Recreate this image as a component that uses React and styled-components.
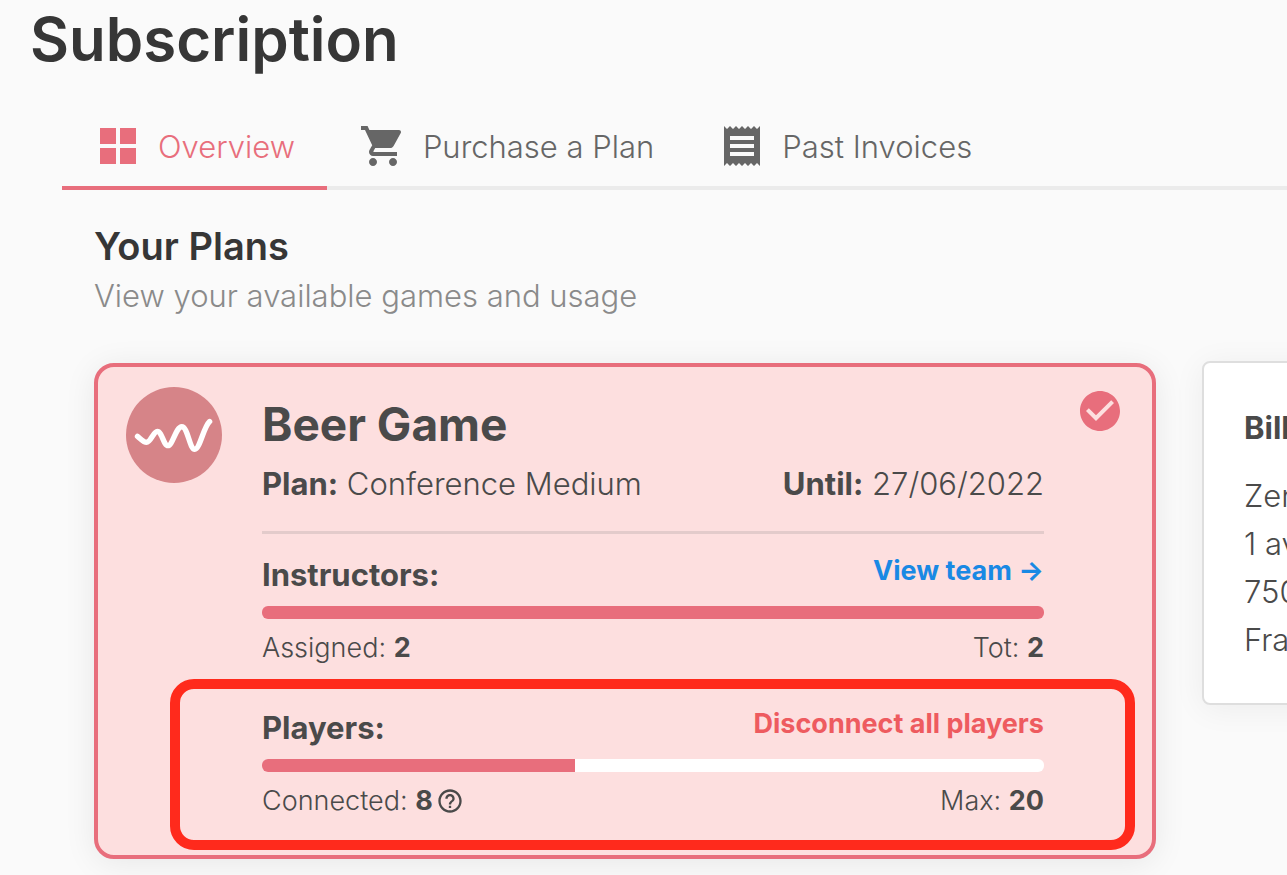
import React from 'react';
import styled, { createGlobalStyle } from 'styled-components'

const GlobalStyle = createGlobalStyle`
    * {
        box-sizing: border-box;
    }
    body {
        margin: 0;
        background: #fafafa;
        color: #4a4a4a;
        font-family: 'Inter', 'Liberation Sans', sans-serif;
        font-size: 31px;
        font-weight: 300;
        line-height: 48px;
        -webkit-font-smoothing: antialiased;
    }
    h1, h2, h3, h4, p {
        margin: 0;
    }
    button {
        padding: 0;
        border: 0;
        background: none;
        font-family: inherit;
        cursor: pointer;
    }
    svg {
        display: block;
        flex-shrink: 0;
    }
`

const Page = styled.main`
    padding-top: 7px;
    overflow: hidden;
`

const PageTitle = styled.h1`
    padding-left: 30px;
    color: #363636;
    font-size: 60px;
    font-weight: 600;
    line-height: 64px;
`

const Tabs = styled.nav`
    display: flex;
    margin: 35px 0 0 62px;
    box-shadow: inset 0 -4px 0 #ebebeb;
`

const Tab = styled.button`
    display: flex;
    align-items: center;
    gap: 16px;
    padding: 16px 32px;
    border-bottom: 4px solid ${ props => props.$active ? '#e86e7c' : 'transparent'};
    color: ${ props => props.$active ? '#e86e7c' : '#666666'};
    font-size: 31px;
    font-weight: 300;
    white-space: nowrap;
`

const TabLabel = styled.span`
    padding-top: 2px;
    line-height: 46px;
`

const Content = styled.section`
    padding: 32px 0 16px 94px;
`

const SectionTitle = styled.h2`
    color: #363636;
    font-size: 38px;
    font-weight: 600;
    line-height: 48px;
`

const Subtitle = styled.p`
    margin-top: 2px;
    color: #8a8a8a;
`

const Columns = styled.div`
    display: grid;
    grid-template-columns: calc(100% - 131px) 420px;
    gap: 46px;
    align-items: start;
    margin-top: 41px;
`

const PlanCard = styled.article`
    display: flex;
    align-items: flex-start;
    margin-top: 2px;
    padding: 20px 28px 34px;
    border: 4px solid #e86e7c;
    border-radius: 20px;
    background: #fddfdf;
    box-shadow: 0 4px 32px rgba(0, 0, 0, 0.08);
`

const PlanBody = styled.div`
    flex: 1;
    min-width: 0;
    margin: 5px 32px 0 40px;
`

const PlanName = styled.h3`
    font-size: 46px;
    font-weight: 700;
    line-height: 64px;
`

const PlanInfo = styled.div`
    display: flex;
    justify-content: space-between;
    margin-top: 4px;
    padding-bottom: 23px;
    border-bottom: 3px solid #e3cbcb;
`

const Usage = styled.section`
    position: relative;
    margin-top: ${ props => props.$highlighted ? '35px' : '16px'};
`

const Highlight = styled.div`
    position: absolute;
    inset: -24px -91px -29px -92px;
    border: 10px solid #ff2a1c;
    border-radius: 24px;
    pointer-events: none;
`

const UsageHeader = styled.div`
    display: flex;
    align-items: flex-start;
    justify-content: space-between;
    padding-top: 1px;
`

const UsageTitle = styled.h4`
    font-size: 31px;
    font-weight: 700;
`

const TeamLink = styled.a`
    color: #1989e4;
    font-size: 27px;
    font-weight: 700;
    line-height: 40px;
    text-decoration: none;
`

const DisconnectButton = styled.button`
    color: #ee5b5f;
    font-size: 27px;
    font-weight: 700;
    line-height: 40px;
`

const Bar = styled.div`
    height: 13px;
    margin: 7px 0 9px;
    border-radius: 6px;
    background: #ffffff;
    overflow: hidden;
`

const BarFill = styled.div`
    height: 100%;
    background: #e86e7c;
`

const UsageFooter = styled.div`
    display: flex;
    justify-content: space-between;
    font-size: 27px;
    line-height: 40px;
`

const Count = styled.span`
    display: flex;
    align-items: center;
    gap: 3px;
`

const BillingCard = styled.aside`
    padding: 41px 40px 39px;
    border: 2px solid #dedede;
    border-radius: 8px;
    background: #ffffff;
    box-shadow: 0 4px 32px rgba(0, 0, 0, 0.06);
    white-space: nowrap;
`

const BillingTitle = styled.h3`
    margin-bottom: 20px;
    font-size: 31px;
    font-weight: 700;
`

const Strong = styled.strong`
    font-weight: 700;
`

const Icon = ({ d, size = 48, color = 'currentColor' }) => (
    <svg width={size} height={size} viewBox="0 0 24 24" fill={color} aria-hidden="true">
        <path d={d} />
    </svg>
)

const icons = {
    grid: 'M3 3h8v8H3zM13 3h8v8h-8zM3 13h8v8H3zM13 13h8v8h-8z',
    cart: 'M7 18c-1.100 0-1.990.9-1.990 2S5.900 22 7 22s2-.9 2-2-.9-2-2-2zM1 2v2h2l3.600 7.590-1.350 2.450c-.16.280-.25.610-.25.960 0 1.100.9 2 2 2h12v-2H7.420c-.14 0-.25-.11-.25-.25l.03-.12.900-1.630h7.450c.75 0 1.410-.41 1.750-1.030l3.580-6.490c.08-.14.120-.31.120-.48 0-.55-.45-1-1-1H5.210l-.94-2H1zm16 16c-1.100 0-1.990.9-1.990 2s.89 2 1.990 2 2-.9 2-2-.9-2-2-2z',
    receipt: 'M18 17H6v-2h12v2zm0-4H6v-2h12v2zm0-4H6V7h12v2zM3 22l1.500-1.500L6 22l1.500-1.500L9 22l1.500-1.500L12 22l1.500-1.500L15 22l1.500-1.500L18 22l1.500-1.500L21 22V2l-1.500 1.500L18 2l-1.500 1.500L15 2l-1.500 1.500L12 2l-1.500 1.500L9 2 7.500 3.500 6 2 4.500 3.500 3 2v20z',
    check: 'M12 2C6.480 2 2 6.480 2 12s4.480 10 10 10 10-4.480 10-10S17.520 2 12 2zm-2 15l-5-5 1.410-1.410L10 14.170l7.590-7.590L19 8l-9 9z',
    help: 'M11 18h2v-2h-2v2zm1-16C6.480 2 2 6.480 2 12s4.480 10 10 10 10-4.480 10-10S17.520 2 12 2zm0 18c-4.410 0-8-3.590-8-8s3.590-8 8-8 8 3.590 8 8-3.590 8-8 8zm0-14c-2.210 0-4 1.790-4 4h2c0-1.100.9-2 2-2s2 .9 2 2c0 2-3 1.750-3 5h2c0-2.250 3-2.500 3-5 0-2.210-1.790-4-4-4z',
}

const GameLogo = () => (
    <svg width="96" height="96" viewBox="0 0 96 96" fill="none" aria-hidden="true">
        <circle cx="48" cy="48" r="48" fill="#d68488" />
        <path
            d="M11.500 49.300C14 51.200 17.500 55.300 20.500 55.300C25 55.300 27.200 44.500 31.300 44.500C36 44.500 37.500 58.600 42 58.600C46.500 58.600 50 39.700 55.800 39.700C61.800 39.700 63.500 62.300 68.800 62.300C73.800 62.300 77.500 40 83.600 34.500"
            stroke="#ffffff"
            strokeWidth="5.400"
            strokeLinecap="round"
            strokeLinejoin="round"
        />
    </svg>
)

const UsageBar = ({ value, max }) => (
    <Bar>
        <BarFill style={{ width: `${value / max * 100}%` }} />
    </Bar>
)

const App = () => (
    <>
        <GlobalStyle />
        <Page>
            <PageTitle>Subscription</PageTitle>
            <Tabs>
                <Tab $active><Icon d={icons.grid} /><TabLabel>Overview</TabLabel></Tab>
                <Tab><Icon d={icons.cart} /><TabLabel>Purchase a Plan</TabLabel></Tab>
                <Tab><Icon d={icons.receipt} /><TabLabel>Past Invoices</TabLabel></Tab>
            </Tabs>
            <Content>
                <SectionTitle>Your Plans</SectionTitle>
                <Subtitle>View your available games and usage</Subtitle>
                <Columns>
                    <PlanCard>
                        <GameLogo />
                        <PlanBody>
                            <PlanName>Beer Game</PlanName>
                            <PlanInfo>
                                <span><Strong>Plan:</Strong> Conference Medium</span>
                                <span><Strong>Until:</Strong> 27/06/2022</span>
                            </PlanInfo>
                            <Usage>
                                <UsageHeader>
                                    <UsageTitle>Instructors:</UsageTitle>
                                    <TeamLink href="#team">View team →</TeamLink>
                                </UsageHeader>
                                <UsageBar value={2} max={2} />
                                <UsageFooter>
                                    <span>Assigned: <Strong>2</Strong></span>
                                    <span>Tot: <Strong>2</Strong></span>
                                </UsageFooter>
                            </Usage>
                            <Usage $highlighted>
                                <UsageHeader>
                                    <UsageTitle>Players:</UsageTitle>
                                    <DisconnectButton>Disconnect all players</DisconnectButton>
                                </UsageHeader>
                                <UsageBar value={8} max={20} />
                                <UsageFooter>
                                    <Count>
                                        <span>Connected: <Strong>8</Strong></span>
                                        <Icon d={icons.help} size={28} />
                                    </Count>
                                    <span>Max: <Strong>20</Strong></span>
                                </UsageFooter>
                                <Highlight />
                            </Usage>
                        </PlanBody>
                        <Icon d={icons.check} color="#e86e7c" />
                    </PlanCard>
                    <BillingCard>
                        <BillingTitle>Billing</BillingTitle>
                        <p>Zensimu</p>
                        <p>1 avenue</p>
                        <p>75000</p>
                        <p>France</p>
                    </BillingCard>
                </Columns>
            </Content>
        </Page>
    </>
)

export default App
